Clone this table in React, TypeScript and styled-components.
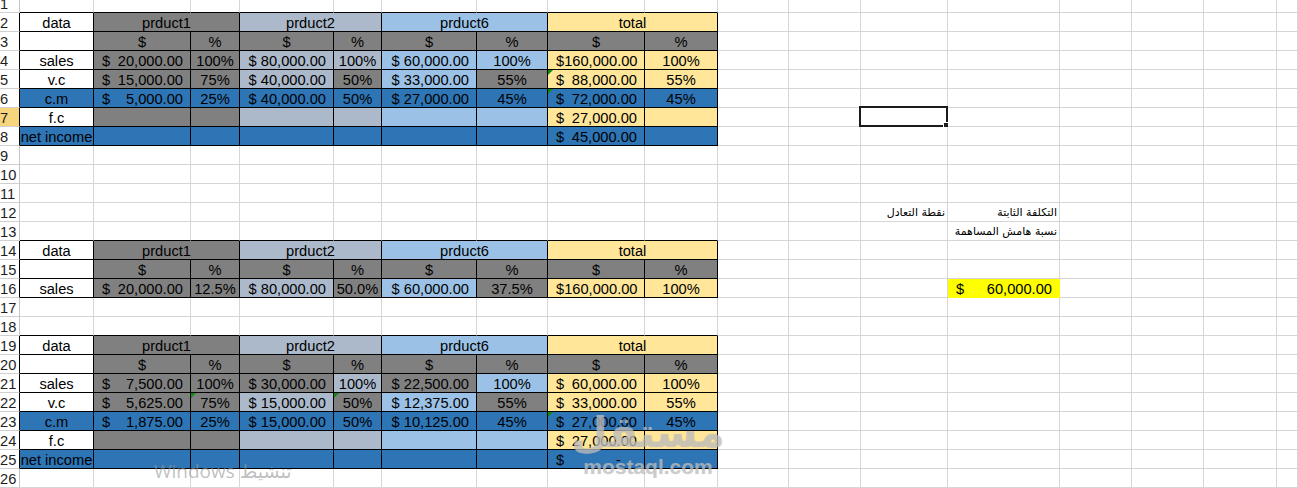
import React from 'react';
import styled, { createGlobalStyle } from 'styled-components';

type Fill = 'none' | 'gray' | 'steel' | 'sky' | 'navy' | 'gold' | 'yellow';
type Kind = 'text' | 'acct' | 'cur' | 'dash' | 'ar';
interface Def {
  k: Kind;
  v?: string;
  fill: Fill;
  span?: number;
  tri?: boolean;
}

const COLS = [74, 97, 49, 94, 48, 95, 71, 97, 73, 71, 72, 87, 112, 72, 72, 73];
const NCOLS = COLS.length + 1;
const NROWS = 26;
const GRIDLINE = '#d6d6d6';
const BLACK = '#000000';

const FILLS: Record<Fill, string> = {
  none: '#ffffff',
  gray: '#808080',
  steel: '#acb9ca',
  sky: '#9bc2e6',
  navy: '#2e75b6',
  gold: '#ffe699',
  yellow: '#ffff00',
};

const TABLES: [number, number][] = [
  [2, 8],
  [14, 16],
  [19, 25],
];

const inTable = (r: number, c: number) =>
  c >= 0 && c <= 8 && TABLES.some(([a, b]) => r >= a && r <= b);

const grid: Record<string, Def> = {};
const put = (r: number, c: number, d: Def) => {
  grid[`${r}-${c}`] = d;
};

const T = (v: string, fill: Fill = 'none'): Def => ({ k: 'text', v, fill });
const acc = (v: string, fill: Fill, tri?: boolean): Def => ({ k: 'acct', v, fill, tri });
const cur = (v: string, fill: Fill): Def => ({ k: 'cur', v, fill });
const E = (fill: Fill): Def => ({ k: 'text', v: '', fill });
const P = (v: string, fill: Fill, tri?: boolean): Def => ({ k: 'text', v, fill, tri });

const putRow = (r: number, defs: Def[]) => defs.forEach((d, i) => put(r, i, d));

const headerRows = (r: number) => {
  put(r, 0, T('data'));
  put(r, 1, { k: 'text', v: 'prduct1', fill: 'gray', span: 2 });
  put(r, 3, { k: 'text', v: 'prduct2', fill: 'steel', span: 2 });
  put(r, 5, { k: 'text', v: 'prduct6', fill: 'sky', span: 2 });
  put(r, 7, { k: 'text', v: 'total', fill: 'gold', span: 2 });
  putRow(r + 1, [E('none'), P('$', 'gray'), P('%', 'gray'), P('$', 'gray'), P('%', 'gray'), P('$', 'gray'), P('%', 'gray'), P('$', 'gray'), P('%', 'gray')]);
};

// table 1
headerRows(2);
putRow(4, [T('sales'), acc('20,000.00', 'gray'), P('100%', 'gray'), cur('$ 80,000.00', 'steel'), P('100%', 'steel'), cur('$ 60,000.00', 'sky'), P('100%', 'sky'), acc('160,000.00', 'gold'), P('100%', 'gold')]);
putRow(5, [T('v.c'), acc('15,000.00', 'gray'), P('75%', 'gray'), cur('$ 40,000.00', 'steel'), P('50%', 'gray'), cur('$ 33,000.00', 'sky'), P('55%', 'gray'), acc('88,000.00', 'gold', true), P('55%', 'gold')]);
putRow(6, [T('c.m', 'navy'), acc('5,000.00', 'navy'), P('25%', 'navy'), cur('$ 40,000.00', 'navy'), P('50%', 'navy'), cur('$ 27,000.00', 'navy'), P('45%', 'navy'), acc('72,000.00', 'navy', true), P('45%', 'navy')]);
putRow(7, [T('f.c'), E('gray'), E('gray'), E('steel'), E('steel'), E('sky'), E('sky'), acc('27,000.00', 'gold'), E('gold')]);
putRow(8, [T('net income', 'navy'), E('navy'), E('navy'), E('navy'), E('navy'), E('navy'), E('navy'), acc('45,000.00', 'navy'), E('navy')]);

// table 2
headerRows(14);
putRow(16, [T('sales'), acc('20,000.00', 'gray'), P('12.5%', 'gray'), cur('$ 80,000.00', 'steel'), P('50.0%', 'gray'), cur('$ 60,000.00', 'sky'), P('37.5%', 'gray'), acc('160,000.00', 'gold'), P('100%', 'gold')]);

// table 3
headerRows(19);
putRow(21, [T('sales'), acc('7,500.00', 'gray'), P('100%', 'gray'), cur('$ 30,000.00', 'gray'), P('100%', 'steel'), cur('$ 22,500.00', 'gray'), P('100%', 'sky'), acc('60,000.00', 'gold'), P('100%', 'gold')]);
putRow(22, [T('v.c'), acc('5,625.00', 'gray'), P('75%', 'gray', true), cur('$ 15,000.00', 'steel'), P('50%', 'gray', true), cur('$ 12,375.00', 'sky'), P('55%', 'gray'), acc('33,000.00', 'gold'), P('55%', 'gold')]);
putRow(23, [T('c.m', 'navy'), acc('1,875.00', 'navy'), P('25%', 'navy'), cur('$ 15,000.00', 'navy'), P('50%', 'navy'), cur('$ 10,125.00', 'navy'), P('45%', 'navy'), acc('27,000.00', 'navy', true), P('45%', 'navy')]);
putRow(24, [T('f.c'), E('gray'), E('gray'), E('steel'), E('steel'), E('sky'), E('sky'), acc('27,000.00', 'gold'), E('gold')]);
putRow(25, [T('net income', 'navy'), E('navy'), E('navy'), E('navy'), E('navy'), E('navy'), E('navy'), { k: 'dash', fill: 'navy' }, E('navy')]);

// side notes
put(12, 11, { k: 'ar', v: 'نقطة التعادل', fill: 'none' });
put(12, 12, { k: 'ar', v: 'التكلفة الثابتة', fill: 'none' });
put(13, 12, { k: 'ar', v: 'نسبة هامش المساهمة', fill: 'none' });
put(16, 12, acc('60,000.00', 'yellow'));

const SELECTED = { r: 7, c: 11 };

const GlobalStyle = createGlobalStyle`
  html, body { margin: 0; padding: 0; background: #ffffff; overflow: hidden; }
  body { font-family: "Liberation Sans", Arial, sans-serif; }
`;

const Page = styled.div`
  position: relative;
  width: 1298px;
  height: 488px;
  overflow: hidden;
  background: #ffffff;
`;

const Sheet = styled.div<{ $cols: string }>`
  display: grid;
  grid-template-columns: ${(p) => p.$cols};
  grid-auto-rows: 19px;
  margin-top: -6px;
  font-family: "Liberation Sans", Arial, sans-serif;
  font-size: 14.67px;
  color: #000000;
`;

const RowHead = styled.div<{ $active: boolean; $edge: string }>`
  box-sizing: border-box;
  border-right: 1px solid ${(p) => p.$edge};
  border-bottom: 1px solid #d0d0d0;
  background: ${(p) => (p.$active ? '#f7d57c' : '#ffffff')};
  padding-top: 2px;
  line-height: 16px;
  color: #1e1e1e;
  white-space: nowrap;
  overflow: hidden;
`;

const Cell = styled.div<{ $bg: string; $br: string; $bb: string; $span: number; $justify: string }>`
  position: relative;
  box-sizing: border-box;
  grid-column: span ${(p) => p.$span};
  background: ${(p) => p.$bg};
  border-right: 1px solid ${(p) => p.$br};
  border-bottom: 1px solid ${(p) => p.$bb};
  display: flex;
  justify-content: ${(p) => p.$justify};
  padding-top: 2px;
  line-height: 16px;
  white-space: nowrap;
  min-width: 0;
`;

const Amount = styled.div<{ $tail: number }>`
  box-sizing: border-box;
  width: 100%;
  display: flex;
  justify-content: space-between;
  padding: 0 ${(p) => p.$tail}px 0 8px;
`;

const RightText = styled.span`
  padding-right: 7px;
`;

const ArabicText = styled.span`
  direction: rtl;
  font-family: "DejaVu Sans", sans-serif;
  font-size: 11px;
  padding-right: 2px;
`;

const Triangle = styled.span`
  position: absolute;
  top: 0;
  left: 0;
  width: 0;
  height: 0;
  border-top: 5px solid #0f8a0f;
  border-right: 5px solid transparent;
`;

const Selection = styled.div`
  position: absolute;
  top: -2px;
  left: -2px;
  right: -1px;
  bottom: -1px;
  border: 2px solid #1b1b1b;
  pointer-events: none;
`;

const FillHandle = styled.span`
  position: absolute;
  right: -4px;
  bottom: -4px;
  width: 5px;
  height: 5px;
  background: #1b1b1b;
  border: 1px solid #ffffff;
`;

const ActivateMark = styled.div`
  position: absolute;
  left: 154px;
  top: 459px;
  font-family: "Open Sans", "DejaVu Sans", sans-serif;
  font-size: 19px;
  line-height: 24px;
  color: rgba(150, 150, 150, 0.6);
  white-space: nowrap;
  pointer-events: none;
`;

const BrandMark = styled.div`
  position: absolute;
  left: 582px;
  top: 409px;
  width: 132px;
  display: flex;
  flex-direction: column;
  align-items: center;
  color: rgba(200, 200, 200, 0.66);
  text-shadow: 0 0 1px rgba(120, 120, 120, 0.35);
  pointer-events: none;
`;

const BrandArabic = styled.span`
  font-family: "DejaVu Sans", sans-serif;
  font-weight: bold;
  font-size: 42px;
  line-height: 48px;
  direction: rtl;
`;

const BrandLatin = styled.span`
  font-family: "Liberation Sans", Arial, sans-serif;
  font-weight: bold;
  font-size: 21px;
  line-height: 20px;
`;

function renderContent(d: Def) {
  switch (d.k) {
    case 'acct':
      return (
        <Amount $tail={7}>
          <span>$</span>
          <span>{d.v}</span>
        </Amount>
      );
    case 'dash':
      return (
        <Amount $tail={23}>
          <span>$</span>
          <span>-</span>
        </Amount>
      );
    case 'cur':
      return <RightText>{d.v}</RightText>;
    case 'ar':
      return <ArabicText>{d.v}</ArabicText>;
    default:
      return d.v ? <span>{d.v}</span> : null;
  }
}

function justifyOf(d?: Def) {
  if (!d) return 'flex-start';
  if (d.k === 'cur' || d.k === 'ar') return 'flex-end';
  if (d.k === 'text') return 'center';
  return 'flex-start';
}

export default function App() {
  const cols = ['20px', ...COLS.map((w) => `${w}px`), '1fr'].join(' ');
  const cells: React.ReactNode[] = [];

  for (let r = 1; r <= NROWS; r++) {
    cells.push(
      <RowHead key={`h${r}`} $active={r === SELECTED.r} $edge={inTable(r, 0) ? BLACK : '#c4c4c4'}>
        {r}
      </RowHead>
    );
    let c = 0;
    while (c < NCOLS) {
      const d = grid[`${r}-${c}`];
      const span = d?.span ?? 1;
      const last = c + span - 1;
      const fill = d ? d.fill : 'none';
      const bg = FILLS[fill];
      let br = inTable(r, last) || inTable(r, last + 1) ? BLACK : GRIDLINE;
      let bb = inTable(r, c) || inTable(r + 1, c) ? BLACK : GRIDLINE;
      if (fill !== 'none' && !inTable(r, c)) {
        br = bg;
        bb = bg;
      }
      const selected = r === SELECTED.r && c === SELECTED.c;
      cells.push(
        <Cell key={`${r}-${c}`} $bg={bg} $br={br} $bb={bb} $span={span} $justify={justifyOf(d)}>
          {d?.tri && <Triangle />}
          {d && renderContent(d)}
          {selected && (
            <Selection>
              <FillHandle />
            </Selection>
          )}
        </Cell>
      );
      c += span;
    }
  }

  return (
    <Page>
      <GlobalStyle />
      <Sheet $cols={cols}>{cells}</Sheet>
      <BrandMark>
        <BrandArabic>مستقل</BrandArabic>
        <BrandLatin>mostaql.com</BrandLatin>
      </BrandMark>
      <ActivateMark dir="ltr">Windows تنشيط</ActivateMark>
    </Page>
  );
}
